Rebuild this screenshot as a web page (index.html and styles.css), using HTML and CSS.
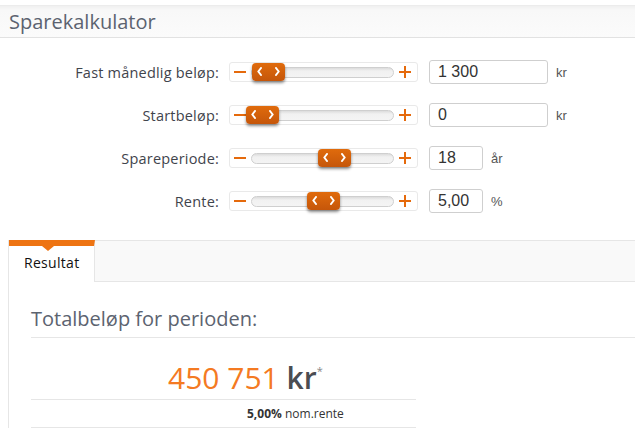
FILE: index.html
```html
<!DOCTYPE html>
<html lang="no">

<head>
  <meta charset="UTF-8">
  <meta name="viewport" content="width=device-width, initial-scale=1.0">
  <title>Sparekalkulator</title>
  <link rel="stylesheet" href="styles.css">
</head>

<body>
  <header class="calc-header">
    <h1 class="calc-title">Sparekalkulator</h1>
  </header>

  <form class="calc-form">
    <label class="calc-label" for="monthly">Fast månedlig beløp:</label>
    <div class="slider">
      <svg class="step" viewBox="0 0 12 12"><rect x="0" y="5" width="12" height="2" fill="#e56a0c" /></svg>
      <div class="track">
        <span class="handle" style="left: 0px">
          <svg class="chev" viewBox="0 0 5 9"><polyline points="4,1 1.3,4.5 4,8" /></svg>
          <svg class="chev" viewBox="0 0 5 9"><polyline points="1,1 3.7,4.5 1,8" /></svg>
        </span>
      </div>
      <svg class="step" viewBox="0 0 12 12"><rect x="0" y="5" width="12" height="2" fill="#e56a0c" /><rect x="5" y="0" width="2" height="12" fill="#e56a0c" /></svg>
    </div>
    <div class="value"><input id="monthly" class="calc-input" value="1 300"><span class="unit">kr</span></div>

    <label class="calc-label" for="start">Startbeløp:</label>
    <div class="slider">
      <svg class="step" viewBox="0 0 12 12"><rect x="0" y="5" width="12" height="2" fill="#e56a0c" /></svg>
      <div class="track">
        <span class="handle" style="left: -6px">
          <svg class="chev" viewBox="0 0 5 9"><polyline points="4,1 1.3,4.5 4,8" /></svg>
          <svg class="chev" viewBox="0 0 5 9"><polyline points="1,1 3.7,4.5 1,8" /></svg>
        </span>
      </div>
      <svg class="step" viewBox="0 0 12 12"><rect x="0" y="5" width="12" height="2" fill="#e56a0c" /><rect x="5" y="0" width="2" height="12" fill="#e56a0c" /></svg>
    </div>
    <div class="value"><input id="start" class="calc-input" value="0"><span class="unit">kr</span></div>

    <label class="calc-label" for="period">Spareperiode:</label>
    <div class="slider">
      <svg class="step" viewBox="0 0 12 12"><rect x="0" y="5" width="12" height="2" fill="#e56a0c" /></svg>
      <div class="track">
        <span class="handle" style="left: 66px">
          <svg class="chev" viewBox="0 0 5 9"><polyline points="4,1 1.3,4.5 4,8" /></svg>
          <svg class="chev" viewBox="0 0 5 9"><polyline points="1,1 3.7,4.5 1,8" /></svg>
        </span>
      </div>
      <svg class="step" viewBox="0 0 12 12"><rect x="0" y="5" width="12" height="2" fill="#e56a0c" /><rect x="5" y="0" width="2" height="12" fill="#e56a0c" /></svg>
    </div>
    <div class="value"><input id="period" class="calc-input short" value="18"><span class="unit">år</span></div>

    <label class="calc-label" for="rate">Rente:</label>
    <div class="slider">
      <svg class="step" viewBox="0 0 12 12"><rect x="0" y="5" width="12" height="2" fill="#e56a0c" /></svg>
      <div class="track">
        <span class="handle" style="left: 55px">
          <svg class="chev" viewBox="0 0 5 9"><polyline points="4,1 1.3,4.5 4,8" /></svg>
          <svg class="chev" viewBox="0 0 5 9"><polyline points="1,1 3.7,4.5 1,8" /></svg>
        </span>
      </div>
      <svg class="step" viewBox="0 0 12 12"><rect x="0" y="5" width="12" height="2" fill="#e56a0c" /><rect x="5" y="0" width="2" height="12" fill="#e56a0c" /></svg>
    </div>
    <div class="value"><input id="rate" class="calc-input short" value="5,00"><span class="unit">%</span></div>
  </form>

  <section class="tabs">
    <div class="tab-bar">
      <span class="tab active">Resultat</span>
      <span class="tab-rest"></span>
    </div>
    <div class="tab-body">
      <h2 class="result-title">Totalbeløp for perioden:</h2>
      <div class="result-col">
        <p class="result-sum"><span class="sum-number">450 751</span> <span class="sum-unit">kr</span><sup>*</sup></p>
        <p class="result-rate"><b>5,00%</b> nom.rente</p>
      </div>
    </div>
  </section>
</body>

</html>
```

FILE: styles.css
```css
* {
  box-sizing: border-box;
}

body {
  margin: 0;
  padding: 0;
  background-color: #fff;
  font-family: "Open Sans", sans-serif;
  overflow: hidden;
}

.calc-header {
  margin-top: 5px;
  height: 33px;
  border-top: 1px solid #ececec;
  border-bottom: 1px solid #e2e2e2;
  background-image: linear-gradient(to bottom, #f0f0f0 0, #f8f8f8 4px, #fbfbfb 100%);
}

.calc-title {
  margin: 0;
  padding-left: 9px;
  font-size: 20px;
  font-weight: 400;
  line-height: 31px;
  color: #5c6370;
}

.calc-form {
  display: grid;
  grid-template-columns: 219px 189px auto;
  column-gap: 10px;
  row-gap: 19px;
  align-items: center;
  padding-top: 22px;
}

.calc-label {
  text-align: right;
  font-size: 14.5px;
  letter-spacing: 0.2px;
  color: #3f444c;
}

.slider {
  display: flex;
  align-items: center;
  height: 20px;
  padding: 0 6px 0 4px;
  border: 1px solid #e9e9e9;
  border-radius: 3px;
  gap: 5px;
}

.step {
  width: 12px;
  height: 12px;
  flex: none;
}

.track {
  position: relative;
  flex: 1;
  height: 11px;
  border: 1px solid #cfcfcf;
  border-radius: 6px;
  background-image: linear-gradient(to bottom, #dcdcdc 0, #f1f1f1 3px, #f4f4f4 100%);
}

.handle {
  position: absolute;
  top: -5px;
  display: flex;
  justify-content: space-between;
  align-items: center;
  width: 33px;
  height: 18px;
  padding: 0 5px;
  border-radius: 4px;
  background-image: linear-gradient(to bottom, #e06b0c 0%, #c5560a 100%);
  box-shadow: 0 2px 3px rgba(0, 0, 0, 0.45);
}

.chev {
  width: 5px;
  height: 9px;
}

.chev polyline {
  fill: none;
  stroke: #fff;
  stroke-width: 2;
  stroke-linecap: round;
  stroke-linejoin: round;
}

.value {
  display: flex;
  align-items: center;
  margin-left: 1px;
}

.calc-input {
  width: 119px;
  height: 24px;
  padding: 0 8px;
  border: 1px solid #cfcfcf;
  border-radius: 3px;
  font-family: "Liberation Sans", Arial, sans-serif;
  font-size: 16px;
  color: #333;
}

.calc-input.short {
  width: 54px;
}

.unit {
  margin-left: 8px;
  font-family: "Liberation Sans", Arial, sans-serif;
  font-size: 13px;
  color: #555;
}

.tabs {
  margin: 27px 0 0 8px;
  border-left: 1px solid #e6e6e6;
}

.tab-bar {
  display: flex;
  height: 42px;
}

.tab {
  position: relative;
  width: 86px;
  padding-left: 15px;
  border-top: 6px solid #ee7412;
  border-right: 1px solid #e6e6e6;
  font-size: 14px;
  letter-spacing: 0.3px;
  line-height: 34px;
  color: #111;
  background-color: #fff;
}

.tab::after {
  content: "";
  position: absolute;
  top: 0;
  left: 33px;
  border-left: 6px solid transparent;
  border-right: 6px solid transparent;
  border-top: 5px solid #ee7412;
}

.tab-rest {
  flex: 1;
  border-top: 1px solid #e6e6e6;
  border-bottom: 1px solid #e6e6e6;
  background-color: #f9f9f9;
}

.tab-body {
  padding: 22px 0 0 22px;
}

.result-title {
  margin: 0;
  padding-bottom: 4px;
  border-bottom: 1px solid #e6e6e6;
  font-size: 20px;
  font-weight: 400;
  line-height: 29px;
  color: #5c6370;
}

.result-col {
  width: 385px;
}

.result-sum {
  margin: 0;
  height: 62px;
  padding: 13px 0 0 137px;
  border-bottom: 1px solid #e6e6e6;
  font-size: 30px;
  line-height: 40px;
}

.sum-number {
  color: #f47a22;
}

.sum-unit {
  font-weight: 600;
  color: #4a4d52;
}

.result-sum sup {
  font-size: 11px;
  color: #888;
  vertical-align: 14px;
}

.result-rate {
  margin: 0;
  height: 28px;
  padding-left: 216px;
  border-bottom: 1px solid #e6e6e6;
  font-size: 12px;
  line-height: 27px;
  color: #333;
}
```
